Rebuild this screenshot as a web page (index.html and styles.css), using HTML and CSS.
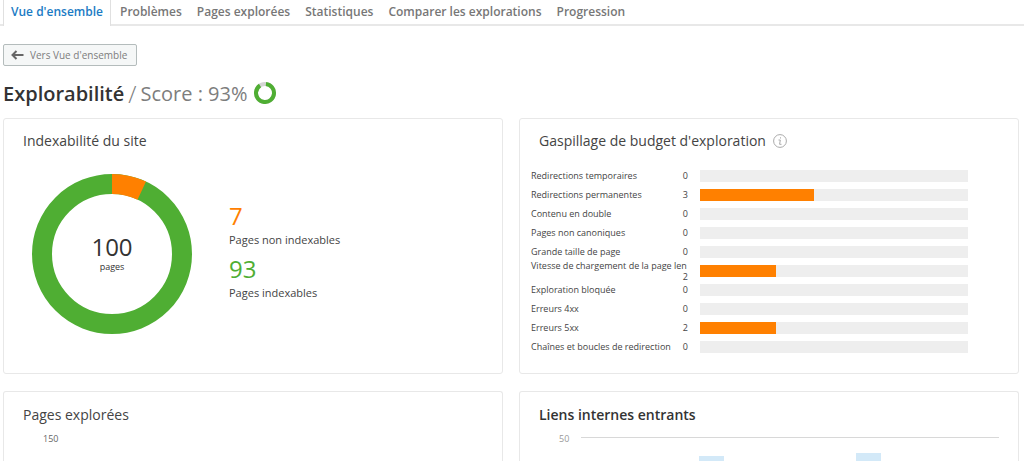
FILE: index.html
```html
<!DOCTYPE html>
<html lang="fr">
<head>
<meta charset="utf-8">
<meta name="viewport" content="width=device-width, initial-scale=1">
<title>Explorabilité</title>
<link rel="stylesheet" href="styles.css">
</head>
<body>
<nav class="tabs">
  <a class="tab tab-active" href="#" aria-current="page">Vue d'ensemble</a>
  <a class="tab" href="#">Problèmes</a>
  <a class="tab" href="#">Pages explorées</a>
  <a class="tab" href="#">Statistiques</a>
  <a class="tab" href="#">Comparer les explorations</a>
  <a class="tab" href="#">Progression</a>
</nav>
<main class="main">
  <button class="back" type="button">
    <svg class="back-icon" viewBox="0 0 13 10" aria-hidden="true"><path d="M12.500 5H1.500M5.500 1L1.500 5L5.500 9"/></svg>
    <span>Vers Vue d'ensemble</span>
  </button>
  <header class="heading">
    <h1 class="title">Explorabilité</h1>
    <span class="slash">/</span>
    <span class="score">Score : 93%</span>
    <svg class="score-ring" viewBox="0 0 22 22" aria-hidden="true">
      <circle class="ring-rest" cx="11" cy="11" r="9"/>
      <circle class="ring-fill" cx="11" cy="11" r="9" pathLength="100" stroke-dasharray="89 11" transform="rotate(-84 11 11)"/>
    </svg>
  </header>
  <div class="grid">
    <section class="card">
      <h2 class="card-title">Indexabilité du site</h2>
      <div class="index">
        <div class="donut">
          <svg class="donut-chart" viewBox="0 0 160 160" aria-hidden="true">
            <circle class="donut-good" cx="80" cy="80" r="70"/>
            <circle class="donut-bad" cx="80" cy="80" r="70" pathLength="100" stroke-dasharray="7 93" transform="rotate(-90 80 80)"/>
          </svg>
          <div class="donut-label"><span class="donut-total">100</span><span class="donut-unit">pages</span></div>
        </div>
        <dl class="counts">
          <div class="count"><dd class="count-value bad">7</dd><dt class="count-name">Pages non indexables</dt></div>
          <div class="count"><dd class="count-value good">93</dd><dt class="count-name">Pages indexables</dt></div>
        </dl>
      </div>
    </section>
    <section class="card">
      <h2 class="card-title">Gaspillage de budget d'exploration
        <svg class="info" viewBox="0 0 14 14" aria-hidden="true"><circle cx="7" cy="7" r="6.400"/><path d="M5.500 6H7.300L6.600 10.300H8.500M7.500 3.300V4.500"/></svg>
      </h2>
      <ul class="bars">
        <li class="row"><span class="row-text"><span>Redirections temporaires</span><span class="row-value">0</span></span><span class="track"></span></li>
        <li class="row"><span class="row-text"><span>Redirections permanentes</span><span class="row-value">3</span></span><span class="track"><span class="fill" style="width:42.5%"></span></span></li>
        <li class="row"><span class="row-text"><span>Contenu en double</span><span class="row-value">0</span></span><span class="track"></span></li>
        <li class="row"><span class="row-text"><span>Pages non canoniques</span><span class="row-value">0</span></span><span class="track"></span></li>
        <li class="row"><span class="row-text"><span>Grande taille de page</span><span class="row-value">0</span></span><span class="track"></span></li>
        <li class="row"><span class="row-text"><span>Vitesse de chargement de la page len</span><span class="row-value">2</span></span><span class="track"><span class="fill" style="width:28.4%"></span></span></li>
        <li class="row"><span class="row-text"><span>Exploration bloquée</span><span class="row-value">0</span></span><span class="track"></span></li>
        <li class="row"><span class="row-text"><span>Erreurs 4xx</span><span class="row-value">0</span></span><span class="track"></span></li>
        <li class="row"><span class="row-text"><span>Erreurs 5xx</span><span class="row-value">2</span></span><span class="track"><span class="fill" style="width:28.4%"></span></span></li>
        <li class="row"><span class="row-text"><span>Chaînes et boucles de redirection</span><span class="row-value">0</span></span><span class="track"></span></li>
      </ul>
    </section>
    <section class="card card-cut">
      <h2 class="card-title">Pages explorées</h2>
      <div class="plot"><span class="tick">150</span></div>
    </section>
    <section class="card card-cut">
      <h2 class="card-title card-title-strong">Liens internes entrants</h2>
      <div class="plot">
        <span class="tick tick-light">50</span>
        <div class="area">
          <span class="column" style="height:22%"></span>
          <span class="column" style="height:36%"></span>
        </div>
      </div>
    </section>
  </div>
</main>
</body>
</html>
```
FILE: styles.css
```css
* { box-sizing: border-box; }
body {
  margin: 0;
  background: #fff;
  color: #333;
  font-family: "Open Sans", "Noto Sans", sans-serif;
}
.tabs {
  display: flex;
  height: 26px;
  padding-left: 3px;
  border-bottom: 2px solid #e8e8e8;
}
.tab {
  height: 24px;
  margin-right: 15px;
  color: #777;
  font-size: 12px;
  font-weight: 600;
  line-height: 24px;
  text-decoration: none;
  white-space: nowrap;
}
.tab-active {
  height: 26px;
  margin-right: 9px;
  padding: 0 7px;
  border: solid #e0e0e0;
  border-width: 0 1px;
  background: #fff;
  color: #1b7bc4;
}
.main { padding: 18px 5px 0 3px; }
.back {
  display: flex;
  align-items: center;
  gap: 6px;
  height: 22px;
  padding: 0 9px 0 7px;
  border: 1px solid #b4bcbc;
  border-radius: 2px;
  background: #f5f7f7;
  color: #7d7d7d;
  font-family: inherit;
  font-size: 10px;
}
.back-icon { width: 13px; height: 10px; fill: none; stroke: #666; stroke-width: 2; }
.heading {
  display: flex;
  align-items: center;
  height: 52px;
  padding-top: 2px;
}
.title { margin: 0; font-size: 20px; font-weight: 600; }
.slash { margin: 0 4px; color: #7d7d7d; font-size: 24px; font-weight: 300; }
.score { color: #7d7d7d; font-size: 20px; }
.score-ring { width: 22px; height: 22px; margin-left: 7px; fill: none; stroke-width: 4; }
.ring-rest { stroke: #d5d5d5; }
.ring-fill { stroke: #4fae33; }
.grid {
  display: grid;
  grid-template-columns: 1fr 1fr;
  gap: 17px 16px;
}
.card { padding: 11px 0 17px; border: 1px solid #e8e8e8; border-radius: 3px; }
.card-cut { padding: 12px 0 0; border-bottom: 0; border-radius: 3px 3px 0 0; }
.card-title {
  display: flex;
  align-items: center;
  gap: 7px;
  margin: 0 19px;
  color: #444;
  font-size: 14px;
  font-weight: 400;
  line-height: 22px;
}
.card-title-strong { color: #333; font-weight: 600; }
.info { width: 14px; height: 14px; fill: none; stroke: #aaa; }
.index {
  display: flex;
  align-items: center;
  gap: 37px;
  padding: 22px 28px 0;
}
.donut { display: grid; width: 160px; height: 160px; }
.donut-chart, .donut-label { grid-area: 1 / 1; }
.donut-chart { fill: none; stroke-width: 20; }
.donut-good { stroke: #4fae33; }
.donut-bad { stroke: #ff8000; }
.donut-label {
  display: flex;
  flex-direction: column;
  align-items: center;
  justify-content: center;
}
.donut-total { font-size: 24px; line-height: 26px; }
.donut-unit { font-size: 9px; line-height: 14px; }
.counts { margin: 0; }
.count { display: flex; flex-direction: column; height: 53px; }
.count-value { margin: 0; font-size: 24px; line-height: 30px; }
.count-name { color: #444; font-size: 11px; line-height: 18px; }
.bad { color: #ff8000; }
.good { color: #4fae33; }
.bars { margin: 14px 50px 0 11px; padding: 0; list-style: none; }
.row { display: flex; align-items: center; gap: 12px; height: 19px; }
.row-text {
  display: flex;
  flex-wrap: wrap;
  flex: none;
  width: 157px;
  color: #444;
  font-size: 9px;
  line-height: 11px;
  white-space: nowrap;
}
.row-value { margin-left: auto; }
.track { flex: 1; height: 12px; background: #eee; }
.fill { display: block; height: 100%; background: #ff8000; }
.plot { display: flex; gap: 12px; height: 35px; padding: 7px 19px 0 39px; }
.tick { color: #666; font-size: 9px; line-height: 12px; }
.tick-light { color: #999; }
.area {
  display: flex;
  align-items: flex-end;
  flex: 1;
  gap: 132px;
  margin-top: 4px;
  padding-left: 118px;
  border-top: 1px solid #d8d8d8;
}
.column { width: 25px; background: #d3e9f8; }
```
